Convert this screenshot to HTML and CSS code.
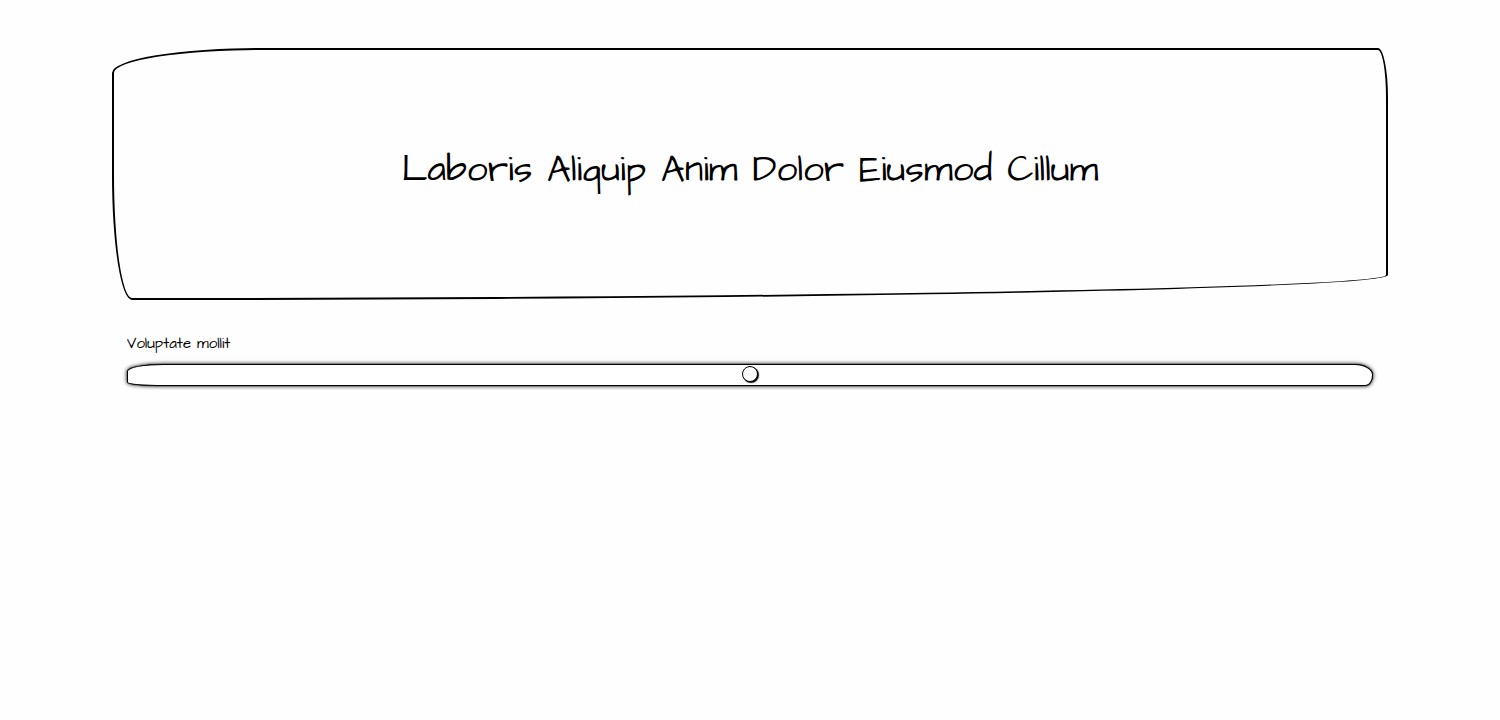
FILE: index.html
```
<!DOCTYPE html>
<html lang="en">
<head>
<meta charset="utf-8">
<meta name="viewport" content="width=device-width, initial-scale=1">
<title>Laboris Aliquip</title>
<link rel="stylesheet" href="styles.css">
</head>
<body>
<main class="page">
  <header class="hero">
    <h1 class="hero-title">Laboris Aliquip Anim Dolor Eiusmod Cillum</h1>
  </header>
  <div class="field">
    <label class="field-label" for="mollit">Voluptate mollit</label>
    <input class="slider" id="mollit" type="range" min="0" max="100" value="50">
  </div>
</main>
</body>
</html>
```
FILE: styles.css
```
* {
  box-sizing: border-box;
}

body {
  margin: 0;
  background: #fefefe;
  color: #000;
  font-family: "Architects Daughter", "Patrick Hand", Lato, sans-serif;
}

.page {
  padding: 48px 112px;
}

.hero {
  padding: 85px 16px 91px;
  border: 2px solid #000;
  border-radius: 150px 10px 1256px 20px / 25px 50px 25px 125px;
  text-align: center;
}

.hero-title {
  margin: 0;
  font-size: 37px;
  line-height: 72px;
  font-weight: 400;
}

.field {
  display: flex;
  flex-direction: column;
  gap: 8px;
  padding: 32px 15px;
}

.field-label {
  align-self: flex-start;
  font-size: 15px;
  line-height: 24px;
}

.slider {
  appearance: none;
  width: 100%;
  height: 22px;
  margin: 0;
  padding-bottom: 2px;
  border: 1px solid #000;
  border-radius: 40px 20px 8px 40px / 8px 12px 12px 4px;
  background: #fff;
  box-shadow: 0 0 1px #000, 0 0 4px #000;
}

.slider::-webkit-slider-thumb {
  appearance: none;
  width: 16px;
  height: 16px;
  border: 1px solid #000;
  border-radius: 50%;
  background: #fff;
  box-shadow: 1px 1px 1px #000;
}
```
